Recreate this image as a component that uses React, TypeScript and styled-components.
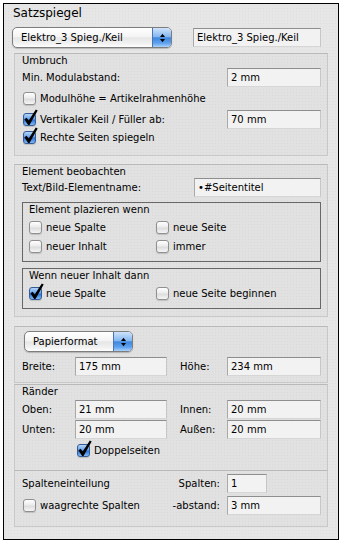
import styled, { createGlobalStyle } from 'styled-components';

const GlobalStyle = createGlobalStyle`
  body {
    margin: 0;
    background: #fff;
    font-family: 'DejaVu Sans', Verdana, sans-serif;
    font-size: 10px;
    color: #000;
  }
`;

type CheckProps = { checked?: boolean };

const Check = ({ checked }: CheckProps) => (
  <Box $checked={checked}>
    {checked && (
      <CheckMark viewBox="0 0 15 17">
        <path d="M1.4 10.2 L3.6 8.8 L5.7 11.5 L12.8 0.5 L14.7 1.6 L6.5 15.9 L5.1 15.9 Z" />
      </CheckMark>
    )}
  </Box>
);

const Option = ({ checked, label, h, mt, ml }: CheckProps & { label: string; h?: number; mt?: number; ml?: number }) => (
  <OptionRow $h={h} $mt={mt} $ml={ml}>
    <Check checked={checked} />
    <span>{label}</span>
  </OptionRow>
);

const Popup = ({ label, w, ml }: { label: string; w: number; ml: number }) => (
  <PopupButton $w={w} $ml={ml}>
    <PopupText>{label}</PopupText>
    <PopupCap>
      <svg width="7" height="12" viewBox="0 0 7 12">
        <polygon points="1,5 3.5,1.8 6,5" fill="#000" />
        <polygon points="1,7 3.5,10.2 6,7" fill="#000" />
      </svg>
    </PopupCap>
  </PopupButton>
);

export default function App() {
  return (
    <>
      <GlobalStyle />
      <Panel>
        <Title>Satzspiegel</Title>
        <TopRow>
          <Popup label="Elektro_3 Spieg./Keil" w={160} ml={-2} />
          <Field $w={128}>Elektro_3 Spieg./Keil</Field>
        </TopRow>

        <Group $mt={5} $pt={0} $pb={9}>
          <GroupLabel>Umbruch</GroupLabel>
          <FieldRow>
            <span>Min. Modulabstand:</span>
            <Field $w={94}>2 mm</Field>
          </FieldRow>
          <Option label="Modulhöhe = Artikelrahmenhöhe" mt={2} ml={1} />
          <FieldRow $mt={2}>
            <Option checked label="Vertikaler Keil / Füller ab:" ml={1} />
            <Field $w={94}>70 mm</Field>
          </FieldRow>
          <Option checked label="Rechte Seiten spiegeln" h={17} ml={1} />
        </Group>

        <Group $mt={8} $pt={0} $pb={7}>
          <GroupLabel>Element beobachten</GroupLabel>
          <FieldRow $mt={-1}>
            <span>Text/Bild-Elementname:</span>
            <Field $w={127}>•#Seitentitel</Field>
          </FieldRow>
          <InnerGroup $mt={5} $pb={6}>
            <InnerLabel>Element plazieren wenn</InnerLabel>
            <CheckGrid $h={18}>
              <Option label="neue Spalte" h={18} />
              <Option label="neue Seite" h={18} />
              <Option label="neuer Inhalt" h={18} />
              <Option label="immer" h={18} />
            </CheckGrid>
          </InnerGroup>
          <InnerGroup $mt={6} $pb={5}>
            <InnerLabel>Wenn neuer Inhalt dann</InnerLabel>
            <CheckGrid $h={19}>
              <Option checked label="neue Spalte" />
              <Option label="neue Seite beginnen" />
            </CheckGrid>
          </InnerGroup>
        </Group>

        <Group $mt={9} $pt={4} $pb={6}>
          <Popup label="Papierformat" w={109} ml={2} />
          <SizeGrid $mt={5}>
            <span>Breite:</span>
            <Field $w={92}>175 mm</Field>
            <SideLabel>Höhe:</SideLabel>
            <Field $w={94}>234 mm</Field>
          </SizeGrid>
        </Group>

        <Group $mt={1} $pt={0} $pb={11}>
          <GroupLabel>Ränder</GroupLabel>
          <SizeGrid $mt={1}>
            <span>Oben:</span>
            <Field $w={92}>21 mm</Field>
            <SideLabel>Innen:</SideLabel>
            <Field $w={94}>20 mm</Field>
            <span>Unten:</span>
            <Field $w={92}>20 mm</Field>
            <SideLabel>Außen:</SideLabel>
            <Field $w={94}>20 mm</Field>
            <GridCell $col={2}>
              <Option checked label="Doppelseiten" mt={2} ml={2} />
            </GridCell>
          </SizeGrid>
        </Group>

        <Group $mt={-1} $pt={3} $pb={11}>
          <ColumnGrid>
            <span>Spalteneinteilung</span>
            <RightLabel>Spalten:</RightLabel>
            <Field $w={40}>1</Field>
            <Option label="waagrechte Spalten" ml={1} />
            <RightLabel>-abstand:</RightLabel>
            <Field $w={94}>3 mm</Field>
          </ColumnGrid>
        </Group>
      </Panel>
    </>
  );
}

const Panel = styled.div`
  margin: 3px 0 0 3px;
  width: 336px;
  height: 537px;
  box-sizing: border-box;
  border: 1px solid #000;
  padding: 0 10px;
  background-color: #e6e6e6;
  background-image: radial-gradient(rgba(0, 0, 0, 0.035) 0.6px, transparent 0.8px);
  background-size: 3px 3px;
  display: flex;
  flex-direction: column;
`;

const Title = styled.div`
  padding-top: 2px;
  margin-left: -1px;
  font-size: 12px;
  line-height: 15px;
`;

const TopRow = styled.div`
  margin-top: 6px;
  height: 21px;
  padding-right: 7px;
  display: flex;
  align-items: center;
  justify-content: space-between;
`;

const PopupButton = styled.div<{ $w: number; $ml: number }>`
  width: ${(p) => p.$w}px;
  margin-left: ${(p) => p.$ml}px;
  height: 21px;
  box-sizing: border-box;
  border: 1px solid #7d7d7d;
  border-radius: 5px;
  overflow: hidden;
  display: flex;
  background: linear-gradient(#ffffff 0%, #f4f4f4 45%, #e6e6e6 52%, #f3f3f3 85%, #ffffff 100%);
  box-shadow: 0 1px 1px rgba(0, 0, 0, 0.2);
`;

const PopupText = styled.div`
  flex: 1;
  padding-left: 8px;
  line-height: 19px;
  white-space: nowrap;
`;

const PopupCap = styled.div`
  width: 18px;
  border-left: 1px solid #4b74b2;
  display: flex;
  align-items: center;
  justify-content: center;
  background: linear-gradient(#cfe3fb 0%, #86b8f1 45%, #3f86df 52%, #5fa2ee 80%, #a9d3fb 100%);
`;

const Field = styled.div<{ $w: number }>`
  width: ${(p) => p.$w}px;
  height: 19px;
  box-sizing: border-box;
  border: 1px solid;
  border-color: #8e8e8e #c6c6c6 #d6d6d6 #a9a9a9;
  background: #f2f2f2;
  padding: 0 3px;
  line-height: 17px;
  white-space: nowrap;
  overflow: hidden;
`;

const Group = styled.div<{ $mt: number; $pt: number; $pb: number }>`
  margin-top: ${(p) => p.$mt}px;
  padding: ${(p) => p.$pt}px 6px ${(p) => p.$pb}px 7px;
  border: 1px solid #c8c8c8;
  border-top-color: #b9b9b9;
  background: rgba(0, 0, 0, 0.018);
  display: flex;
  flex-direction: column;
`;

const GroupLabel = styled.div`
  height: 14px;
  line-height: 14px;
`;

const FieldRow = styled.div<{ $mt?: number }>`
  margin-top: ${(p) => p.$mt ?? 0}px;
  height: 19px;
  display: grid;
  grid-template-columns: 1fr auto;
  align-items: center;
  white-space: nowrap;
`;

const OptionRow = styled.div<{ $h?: number; $mt?: number; $ml?: number }>`
  height: ${(p) => p.$h ?? 19}px;
  margin-top: ${(p) => p.$mt ?? 0}px;
  padding-left: ${(p) => p.$ml ?? 0}px;
  display: flex;
  align-items: center;
  gap: 4px;
  white-space: nowrap;
`;

const Box = styled.span<{ $checked?: boolean }>`
  position: relative;
  flex: none;
  width: 13px;
  height: 13px;
  box-sizing: border-box;
  border-radius: 3px;
  border: 1px solid ${(p) => (p.$checked ? '#345b96' : '#8f8f8f')};
  background: ${(p) =>
    p.$checked
      ? 'linear-gradient(#b4d5f8 0%, #66a2ec 45%, #2e72d6 55%, #7fbbf7 100%)'
      : 'linear-gradient(#ffffff 0%, #ececec 45%, #dcdcdc 55%, #f6f6f6 100%)'};
  box-shadow: 0 1px 1px rgba(0, 0, 0, 0.15);
`;

const CheckMark = styled.svg`
  position: absolute;
  left: -1px;
  top: -5px;
  width: 15px;
  height: 17px;
  overflow: visible;
  fill: #000;
`;

const InnerGroup = styled.div<{ $mt: number; $pb: number }>`
  margin-top: ${(p) => p.$mt}px;
  padding: 0 5px ${(p) => p.$pb}px 6px;
  border: 1px solid #676767;
`;

const InnerLabel = styled.div`
  height: 15px;
  line-height: 14px;
`;

const CheckGrid = styled.div<{ $h: number }>`
  display: grid;
  grid-template-columns: 127px 1fr;
  grid-auto-rows: ${(p) => p.$h}px;
  row-gap: 1px;
`;

const SizeGrid = styled.div<{ $mt: number }>`
  margin-top: ${(p) => p.$mt}px;
  display: grid;
  grid-template-columns: 53px 92px 1fr 94px;
  grid-auto-rows: 19px;
  row-gap: 1px;
  align-items: center;
  white-space: nowrap;
`;

const SideLabel = styled.span`
  padding-left: 13px;
`;

const GridCell = styled.div<{ $col: number }>`
  grid-column: ${(p) => p.$col} / span 2;
`;

const ColumnGrid = styled.div`
  display: grid;
  grid-template-columns: 1fr 55px 94px;
  grid-auto-rows: 19px;
  row-gap: 3px;
  align-items: center;
  white-space: nowrap;
`;

const RightLabel = styled.span`
  text-align: right;
  padding-right: 7px;
`;
